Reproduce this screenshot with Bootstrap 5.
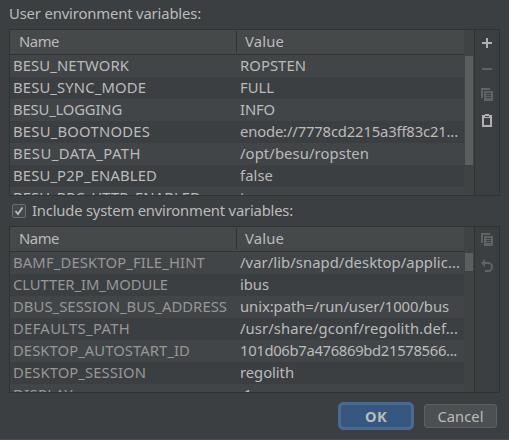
<!DOCTYPE html>
<html lang="en" data-bs-theme="dark">
<head>
<meta charset="utf-8">
<meta name="viewport" content="width=device-width, initial-scale=1">
<title>Environment Variables</title>
<link href="https://cdn.jsdelivr.net/npm/bootstrap@5.3.0/dist/css/bootstrap.min.css" rel="stylesheet">
<style>
body { background: #3c3f41; color: #bbb; font: 14.8px/22px "Noto Sans", "Open Sans", sans-serif; }
.dialog { width: 509px; height: 440px; padding: 3px 9px 0; border-bottom: 1px solid #464a5c; }
.caption { height: 26px; line-height: 21px; }
.panel { width: 491px; height: 167px; border: 1px solid #303233; }
.grid-head { height: 25px; line-height: 23px; background: #45494a; border-bottom: 1px solid #303233; }
.head-name { width: 227px; padding: 0 0 1px 9px; }
.head-name::after { content: ""; width: 1px; height: 22px; margin-top: 1px; background: #323435; }
.head-value { padding: 0 0 0 8px; }
.line { height: 22px; line-height: 20px; padding-left: 3px; }
.line:nth-child(odd) { background: #414547; }
.name-cell { width: 227px; }
.panel-system .name-cell { color: #979797; }
.gutter { width: 10px; background: #3f4344; padding: 26px 1px 0; }
.thumb { width: 8px; background: #5b5f60; }
.panel-user .thumb { height: 109px; }
.panel-system .thumb { height: 18px; }
.tools { width: 25px; border-left: 1px solid #303233; padding-top: 5px; gap: 10px; }
.tools svg { display: block; margin-left: 4px; width: 16px; height: 16px; }
.on { color: #afb1b3; }
.off { color: #606264; }
.check-row { height: 30px; padding: 0 0 0 3px; gap: 6px; }
.check-text { padding-bottom: 2px; }
.tick { width: 14px; height: 14px; border: 1px solid #6b6e70; border-radius: 2px; background: #43494a; }
.tick svg { display: block; }
.actions { padding: 9px 3px 0 0; gap: 10px; }
.action { height: 24px; width: 73px; padding: 0; font-size: 14.6px; line-height: 22px; border: 1px solid #5e6060; border-radius: 3px; background: #4c5052; color: #bbb; }
.action-main { height: 28px; width: 76px; line-height: 22px; border: 1px solid #466d94; background: #365880; box-shadow: inset 0 0 0 1px #43698e, inset 0 0 0 2px #4c708c; border-radius: 5px; font-weight: 700; }
[data-w] { display: inline-block; white-space: pre; }
</style>
<script src="https://cdn.jsdelivr.net/npm/bootstrap@5.3.0/dist/js/bootstrap.bundle.min.js"></script>
</head>
<body>
<svg class="d-none">
  <symbol id="i-copy" viewBox="0 0 16 16"><path fill="currentColor" d="M2 1h9v2H4v8H2zM5 4h9v10H5z"/><path stroke="#3c3f41" d="M7 6.500h5M7 8.500h5M7 10.500h5"/></symbol>
</svg>
<main class="dialog overflow-hidden">
  <div class="caption"><span data-w="192">User environment variables:</span></div>
  <section class="panel panel-user d-flex overflow-hidden">
    <div class="flex-grow-1">
      <div class="grid-head d-flex"><div class="head-name d-flex justify-content-between"><span data-w="40">Name</span></div><div class="head-value"><span data-w="39">Value</span></div></div>
      <div>
        <div class="line d-flex"><div class="name-cell"><span data-w="116">BESU_NETWORK</span></div><div><span data-w="66">ROPSTEN</span></div></div>
        <div class="line d-flex"><div class="name-cell"><span data-w="133">BESU_SYNC_MODE</span></div><div><span data-w="34">FULL</span></div></div>
        <div class="line d-flex"><div class="name-cell"><span data-w="109">BESU_LOGGING</span></div><div><span data-w="35">INFO</span></div></div>
        <div class="line d-flex"><div class="name-cell"><span data-w="137">BESU_BOOTNODES</span></div><div><span data-w="218">enode://7778cd2215a3ff83c21...</span></div></div>
        <div class="line d-flex"><div class="name-cell"><span data-w="128">BESU_DATA_PATH</span></div><div><span data-w="129">/opt/besu/ropsten</span></div></div>
        <div class="line d-flex"><div class="name-cell"><span data-w="144">BESU_P2P_ENABLED</span></div><div><span data-w="33">false</span></div></div>
        <div class="line d-flex"><div class="name-cell"><span data-w="188">BESU_RPC_HTTP_ENABLED</span></div><div><span data-w="28">true</span></div></div>
      </div>
    </div>
    <div class="gutter"><div class="thumb"></div></div>
    <div class="tools d-flex flex-column">
      <svg class="on" viewBox="0 0 16 16"><path fill="currentColor" d="M3 7h4V3h2v4h4v2H9v4H7V9H3z"/></svg>
      <svg class="off" viewBox="0 0 16 16"><path fill="currentColor" d="M3 7h10v2H3z"/></svg>
      <svg class="off"><use href="#i-copy"/></svg>
      <svg class="on" viewBox="0 0 16 16"><path fill="currentColor" fill-rule="evenodd" d="M3 2h3V1h4v1h3v12H3zM5 5v7h6V5zM6 3v1h4V3z"/></svg>
    </div>
  </section>
  <label class="check-row d-flex align-items-center">
    <span class="tick"><svg width="12" height="12" viewBox="0 0 12 12"><path d="M2.500 6 5 9 9.500 2.500" fill="none" stroke="#bbb" stroke-width="1.800"/></svg></span>
    <span class="check-text" data-w="261">Include system environment variables:</span>
  </label>
  <section class="panel panel-system d-flex overflow-hidden">
    <div class="flex-grow-1">
      <div class="grid-head d-flex"><div class="head-name d-flex justify-content-between"><span data-w="40">Name</span></div><div class="head-value"><span data-w="39">Value</span></div></div>
      <div>
        <div class="line d-flex"><div class="name-cell"><span data-w="192">BAMF_DESKTOP_FILE_HINT</span></div><div><span data-w="220">/var/lib/snapd/desktop/applic...</span></div></div>
        <div class="line d-flex"><div class="name-cell"><span data-w="155">CLUTTER_IM_MODULE</span></div><div><span data-w="29">ibus</span></div></div>
        <div class="line d-flex"><div class="name-cell"><span data-w="214">DBUS_SESSION_BUS_ADDRESS</span></div><div><span data-w="209">unix:path=/run/user/1000/bus</span></div></div>
        <div class="line d-flex"><div class="name-cell"><span data-w="117">DEFAULTS_PATH</span></div><div><span data-w="218">/usr/share/gconf/regolith.def...</span></div></div>
        <div class="line d-flex"><div class="name-cell"><span data-w="177">DESKTOP_AUTOSTART_ID</span></div><div><span data-w="217">101d06b7a476869bd21578566...</span></div></div>
        <div class="line d-flex"><div class="name-cell"><span data-w="133">DESKTOP_SESSION</span></div><div><span data-w="54">regolith</span></div></div>
        <div class="line d-flex"><div class="name-cell"><span data-w="60">DISPLAY</span></div><div><span data-w="12">:1</span></div></div>
      </div>
    </div>
    <div class="gutter"><div class="thumb"></div></div>
    <div class="tools off d-flex flex-column">
      <svg><use href="#i-copy"/></svg>
      <svg viewBox="0 0 16 16"><path fill="currentColor" d="M2 5l4-4v8z"/><path fill="none" stroke="currentColor" stroke-width="2" d="M5 5h4.500a3.500 4 0 0 1 0 8H6"/></svg>
    </div>
  </section>
  <div class="actions d-flex justify-content-end align-items-center">
    <button class="btn action action-main"><span data-w="22">OK</span></button>
    <button class="btn action"><span data-w="46">Cancel</span></button>
  </div>
</main>
<script>
document.querySelectorAll('[data-w]').forEach(el => {
  const gap = (el.dataset.w - el.getBoundingClientRect().width) / el.textContent.length;
  el.style.letterSpacing = gap.toFixed(3) + 'px';
});
</script>
</body>
</html>
